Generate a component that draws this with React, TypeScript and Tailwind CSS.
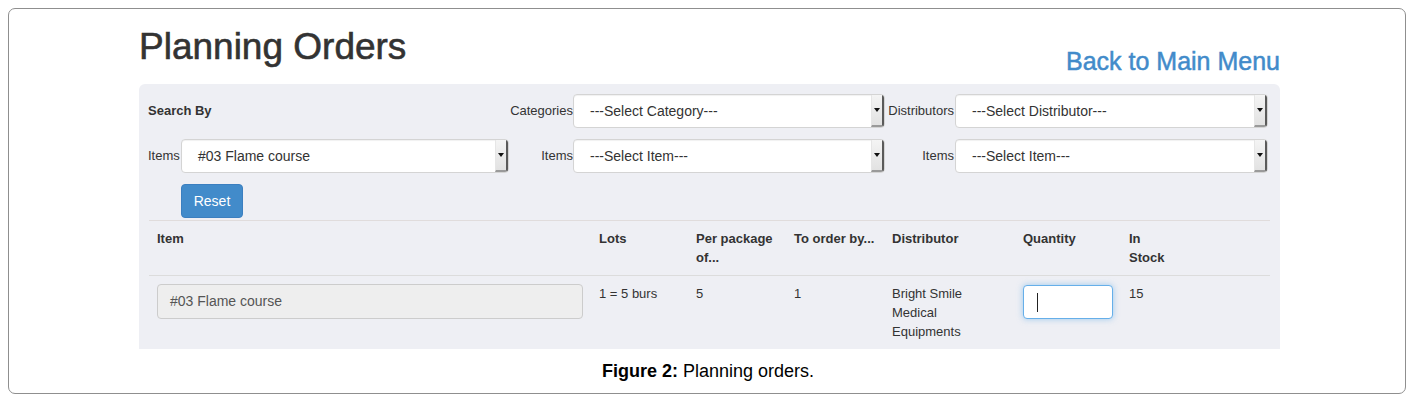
import React from "react";

function FakeSelect({ text, width }: { text: string; width: string }) {
  return (
    <div
      className={`${width} h-[34px] flex items-stretch bg-white border border-[#d4d4d4] rounded-[4px] shadow-[inset_0_1px_1px_rgba(0,0,0,0.06)] overflow-hidden`}
    >
      <div className="flex-1 flex items-center pl-[16px] text-[14px] text-[#333]">{text}</div>
      <div className="w-[13px] flex items-center justify-center bg-gradient-to-b from-[#f4f4f4] to-[#e2e2e2] border-l border-[#e6e6e6] border-r-[2px] border-r-[#5a5a5a] border-b-[2px] border-b-[#9a9a9a]">
        <svg width="6" height="4" viewBox="0 0 6 4">
          <polygon points="0,0 6,0 3,4" fill="#111" />
        </svg>
      </div>
    </div>
  );
}

export default function App() {
  return (
    <div className="p-[8px] bg-white" style={{ fontFamily: '"Liberation Sans", Arial, Helvetica, sans-serif' }}>
      <div className="w-[1398px] h-[386px] border border-[#8f8f8f] rounded-[7px]">
        <div className="ml-[130px] w-[1141px]">
          {/* Header */}
          <div className="h-[75px] flex justify-between items-start">
            <h1 className="mt-[18px] text-[37px] leading-[40px] text-[#333] font-normal [-webkit-text-stroke:0.6px_#333]">
              Planning Orders
            </h1>
            <a className="mt-[39px] text-[25px] leading-[26px] text-[#428bca] font-normal [-webkit-text-stroke:0.5px_#428bca]">
              Back to Main Menu
            </a>
          </div>

          {/* Panel */}
          <div className="bg-[#eeeff4] rounded-t-[6px] pt-[10px] pl-[9px]">
            <div className="grid grid-cols-[361px_64px_312px_70px_313px] auto-rows-[34px] gap-y-[11px] text-[13px] text-[#333]">
              <div className="flex items-center font-bold">Search By</div>
              <div className="flex items-center justify-end">Categories</div>
              <FakeSelect text="---Select Category---" width="w-[312px]" />
              <div className="flex items-center justify-end pr-[1px]">Distributors</div>
              <FakeSelect text="---Select Distributor---" width="w-[313px]" />

              <div className="flex items-center">
                <span className="w-[33px]">Items</span>
                <FakeSelect text="#03 Flame course" width="w-[328px]" />
              </div>
              <div className="flex items-center justify-end">Items</div>
              <FakeSelect text="---Select Item---" width="w-[312px]" />
              <div className="flex items-center justify-end pr-[1px]">Items</div>
              <FakeSelect text="---Select Item---" width="w-[313px]" />

              <div className="pl-[33px]">
                <button className="w-[62px] h-[34px] bg-[#428bca] border border-[#3b7fc0] rounded-[4px] text-white text-[14px]">
                  Reset
                </button>
              </div>
            </div>

            <table className="mt-[2px] ml-[1px] w-[1121px] table-fixed border-collapse text-[13px] leading-[19px] text-[#333]">
              <colgroup>
                <col className="w-[442px]" />
                <col className="w-[97px]" />
                <col className="w-[98px]" />
                <col className="w-[98px]" />
                <col className="w-[131px]" />
                <col className="w-[106px]" />
                <col className="w-[149px]" />
              </colgroup>
              <thead>
                <tr className="text-left font-bold">
                  <th className="border-t border-[#e0dcdc] p-[8px] align-top">Item</th>
                  <th className="border-t border-[#e0dcdc] p-[8px] align-top">Lots</th>
                  <th className="border-t border-[#e0dcdc] p-[8px] align-top">
                    Per package
                    <br />
                    of...
                  </th>
                  <th className="border-t border-[#e0dcdc] p-[8px] align-top whitespace-nowrap">To order by...</th>
                  <th className="border-t border-[#e0dcdc] p-[8px] align-top">Distributor</th>
                  <th className="border-t border-[#e0dcdc] p-[8px] align-top">Quantity</th>
                  <th className="border-t border-[#e0dcdc] p-[8px] align-top">
                    In
                    <br />
                    Stock
                  </th>
                </tr>
              </thead>
              <tbody>
                <tr>
                  <td className="border-t border-[#dcdcdc] p-[8px] align-top">
                    <div className="w-[426px] h-[35px] flex items-center px-[12px] bg-[#eeeeee] border border-[#cccccc] rounded-[4px] text-[14px] text-[#555]">
                      #03 Flame course
                    </div>
                  </td>
                  <td className="border-t border-[#dcdcdc] p-[8px] align-top">1 = 5 burs</td>
                  <td className="border-t border-[#dcdcdc] p-[8px] align-top">5</td>
                  <td className="border-t border-[#dcdcdc] p-[8px] align-top">1</td>
                  <td className="border-t border-[#dcdcdc] p-[8px] align-top">
                    Bright Smile
                    <br />
                    Medical
                    <br />
                    Equipments
                  </td>
                  <td className="border-t border-[#dcdcdc] p-[8px] align-top">
                    <div className="mt-[1px] w-[90px] h-[34px] flex items-center pl-[13px] bg-white border border-[#66afe9] rounded-[4px] shadow-[0_0_6px_rgba(102,175,233,0.6)]">
                      <span className="w-px h-[19px] bg-[#222]" />
                    </div>
                  </td>
                  <td className="border-t border-[#dcdcdc] p-[8px] align-top">15</td>
                </tr>
              </tbody>
            </table>
          </div>
        </div>

        <p className="mt-[12px] text-center text-[18px] leading-[20px] text-black pl-[2px]">
          <span className="font-bold">Figure 2:</span> Planning orders.
        </p>
      </div>
    </div>
  );
}
